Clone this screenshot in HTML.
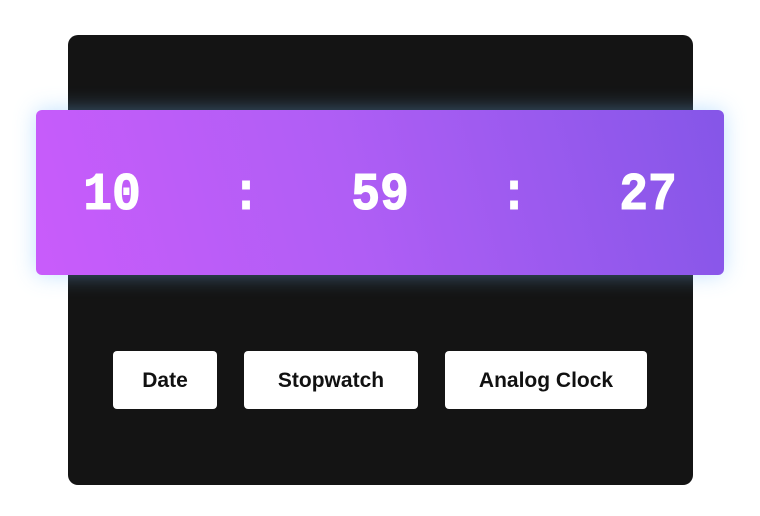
<!DOCTYPE html>
<html><head><style>
body{margin:0;width:760px;height:516px;background:#fff;position:relative;overflow:hidden;font-family:"Liberation Sans",sans-serif}
.card{position:absolute;left:68px;top:35px;width:625px;height:450px;background:#141414;border-radius:10px}
.band{position:absolute;left:36px;top:110px;width:688px;height:165px;border-radius:6px;background:linear-gradient(75deg,#c95cfb 0%,#b05ef5 45%,#8556e8 100%);box-shadow:0 0 22px rgba(120,190,255,.45)}
.d{position:absolute;top:166px;width:100px;margin-left:-50px;text-align:center;color:#fff;font:bold 48px "Liberation Mono",monospace;transform:scaleY(1.1);line-height:60px;-webkit-text-stroke:1px #fff}
.b{position:absolute;top:351px;height:58px;background:#fff;border-radius:4px;display:flex;align-items:center;justify-content:center;font-weight:bold;font-size:21px;color:#111;padding-top:2px;box-sizing:border-box}
</style></head><body>
<div class="card"></div>
<div class="band"></div>
<div class="d" style="left:112px">10</div>
<div class="d" style="left:246px">:</div>
<div class="d" style="left:380px">59</div>
<div class="d" style="left:514px">:</div>
<div class="d" style="left:648px">27</div>
<div class="b" style="left:113px;width:104px">Date</div>
<div class="b" style="left:244px;width:174px">Stopwatch</div>
<div class="b" style="left:445px;width:202px">Analog Clock</div>
</body></html>
